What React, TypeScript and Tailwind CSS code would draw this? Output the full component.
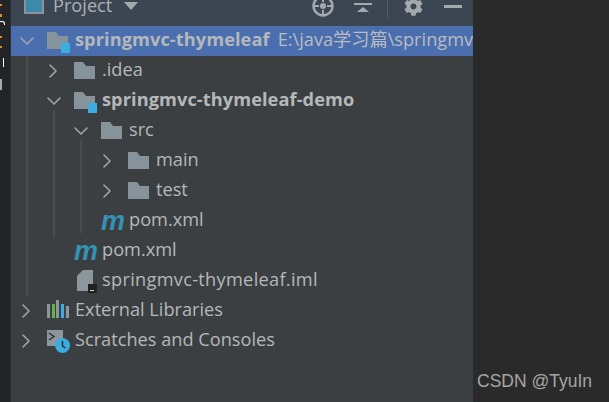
import { ChevronDown, ChevronRight } from "lucide-react"
import { FaCog } from "react-icons/fa"

const Folder = ({ badge }: { badge?: boolean }) => (
  <svg width="24" height="24" viewBox="0 0 24 24" className="shrink-0 overflow-visible">
    <path d="M2 3h9l3 4h9v13H2z" fill="#87939a" />
    {badge && <rect x="16" y="14" width="9" height="10" fill="#3aaee0" />}
  </svg>
)

const Maven = () => (
  <span className="w-[24px] shrink-0 pl-[2px] text-center font-['Liberation_Sans',sans-serif] text-[27px] leading-[24px] font-bold italic text-[#3592b5]">m</span>
)

const Iml = () => (
  <svg width="24" height="24" viewBox="0 0 24 24" className="shrink-0 overflow-visible">
    <path d="M11 1h10v21H5V7z" fill="#8c979d" />
    <rect x="16" y="15" width="9" height="9" fill="#1f2022" />
    <rect x="18" y="21" width="4" height="1" fill="#d5d5d5" />
  </svg>
)

const Libraries = () => (
  <svg width="24" height="24" viewBox="0 0 24 24" className="shrink-0">
    <rect x="2" y="5" width="3" height="14" fill="#8c979d" />
    <rect x="7" y="5" width="3" height="14" fill="#62b543" />
    <rect x="11" y="1" width="3" height="18" fill="#8c979d" />
    <rect x="16" y="5" width="3" height="14" fill="#3aaee0" />
    <rect x="21" y="7" width="3" height="12" fill="#8c979d" />
  </svg>
)

const Scratches = () => (
  <svg width="24" height="24" viewBox="0 0 24 24" className="shrink-0 overflow-visible">
    <rect x="2" y="1" width="16" height="16" fill="#8c979d" />
    <path d="M4 4l5 3.5-5 3.5" fill="none" stroke="#2f3335" strokeWidth="1.5" />
    <circle cx="17.5" cy="16.5" r="7.5" fill="#3aaee0" />
    <path d="M17.5 12v5l3 2" fill="none" stroke="#2b2d30" strokeWidth="1.5" />
  </svg>
)

const Target = () => (
  <svg width="22" height="22" viewBox="0 0 22 22" className="shrink-0">
    <circle cx="11" cy="11" r="9.5" fill="none" stroke="#a4a9ad" strokeWidth="2.4" />
    <circle cx="11" cy="11" r="3" fill="#a4a9ad" />
    <path d="M11 1v6M11 15v6M1 11h6M15 11h6" stroke="#a4a9ad" strokeWidth="2" />
  </svg>
)

const Collapse = () => (
  <svg width="18" height="22" viewBox="0 0 18 22" className="shrink-0">
    <rect x="0" y="8" width="18" height="2" fill="#a4a9ad" />
    <path d="M9 12l6 5H3z" fill="#a4a9ad" />
  </svg>
)

type Row = {
  indent: number
  arrow?: "open" | "closed"
  icon: React.ReactNode
  name: string
  bold?: boolean
  wide?: boolean
  path?: string
  selected?: boolean
}

const rows: Row[] = [
  { indent: 18, arrow: "open", icon: <Folder badge />, name: "springmvc-thymeleaf", bold: true, path: "E:\\java学习篇\\springmvc-thymeleaf", selected: true },
  { indent: 45, arrow: "closed", icon: <Folder />, name: ".idea" },
  { indent: 45, arrow: "open", icon: <Folder badge />, name: "springmvc-thymeleaf-demo", bold: true },
  { indent: 72, arrow: "open", icon: <Folder />, name: "src" },
  { indent: 99, arrow: "closed", icon: <Folder />, name: "main" },
  { indent: 99, arrow: "closed", icon: <Folder />, name: "test" },
  { indent: 72, icon: <Maven />, name: "pom.xml" },
  { indent: 45, icon: <Maven />, name: "pom.xml" },
  { indent: 45, icon: <Iml />, name: "springmvc-thymeleaf.iml", wide: true },
  { indent: 18, arrow: "closed", icon: <Libraries />, name: "External Libraries" },
  { indent: 18, arrow: "closed", icon: <Scratches />, name: "Scratches and Consoles" },
]

export default function App() {
  return (
    <div className="flex h-[402px] w-[609px] overflow-hidden bg-[#2a2a2a] font-['Open_Sans','Noto_Sans_CJK_SC',sans-serif]">
      <div className="relative w-[10px] shrink-0 bg-[#232425]">
        <span className="absolute top-[4px] left-0 h-[2px] w-[2px] bg-[#d9902f]" />
        <span className="absolute top-[14px] left-0 h-[3px] w-[2px] bg-[#d9902f]" />
        <span className="absolute top-[21px] left-0 h-[4px] w-[5px] rounded-tr-[3px] border-t border-r border-white" />
        <span className="absolute top-[36px] left-0 h-[2px] w-[2px] bg-[#d9902f]" />
        <span className="absolute top-[46px] left-0 h-[2px] w-[2px] bg-[#d9902f]" />
        <span className="absolute top-[58px] left-[3px] h-[9px] w-[1px] bg-white" />
        <span className="absolute top-[79px] left-0 h-[11px] w-[2px] bg-[#a8a8a8]" />
      </div>
      <div className="flex w-[463px] shrink-0 flex-col overflow-hidden border-l border-[#2f3234] bg-[#3c3f41]">
        <div className="flex h-[26px] shrink-0 items-start justify-between overflow-hidden bg-[#3c4652] pr-[11px] pl-[13px]">
          <div className="-mt-[6px] flex h-[24px] items-center text-[18.2px] text-[#aab0b4]">
            <span className="h-[16px] w-[20px] border-2 border-[#8a9399] bg-[#3d89a8]" />
            <span className="ml-[9px]">Project</span>
            <span className="ml-[12px] border-x-[7px] border-t-[8px] border-x-transparent border-t-[#a4a9ad]" />
          </div>
          <div className="-mt-[6px] flex h-[24px] items-center">
            <Target />
            <span className="ml-[20px]"><Collapse /></span>
            <span className="ml-[15px] h-[24px] w-[1px] bg-[#555a5f]" />
            <FaCog className="ml-[16px] text-[19px] text-[#a4a9ad]" />
            <span className="ml-[21px] h-[3px] w-[18px] bg-[#a4a9ad]" />
          </div>
        </div>
        <ul className="relative flex flex-col">
          <span className="absolute top-[24px] left-[15px] h-[247px] w-[2px] bg-[#4a4d50]" />
          <span className="absolute top-[84px] left-[42px] h-[127px] w-[2px] bg-[#4a4d50]" />
          <span className="absolute top-[114px] left-[69px] h-[93px] w-[2px] bg-[#4a4d50]" />
          {rows.map((row, i) => (
            <li
              key={i}
              className={`relative flex h-[30px] items-center whitespace-nowrap text-[18.2px] text-[#b4b8ba] ${row.selected ? "bg-[#4b6eaf]" : ""}`}
            >
              <span className="shrink-0" style={{ width: row.indent - 11 }} />
              <span className="flex w-[27px] shrink-0 items-center text-[#a0a4a7]">
                {row.arrow === "open" && <ChevronDown size={24} strokeWidth={1.6} absoluteStrokeWidth className="-ml-[3px]" />}
                {row.arrow === "closed" && <ChevronRight size={24} strokeWidth={1.6} absoluteStrokeWidth className="-ml-[4px]" />}
              </span>
              {row.icon}
              <span className={`ml-[6px] -mt-[2px] ${row.bold ? "font-bold tracking-[0.08px]" : ""} ${row.wide ? "tracking-[0.3px]" : ""}`}>{row.name}</span>
              {row.path && <span className="ml-[8px] -mt-[2px] text-[#b9bcc0]">{row.path}</span>}
            </li>
          ))}
        </ul>
      </div>
      <div className="relative flex-1">
        <span className="absolute top-[368px] left-[4px] font-['Liberation_Sans',sans-serif] text-[17.5px] text-[#a5a5a5]">CSDN @TyuIn</span>
      </div>
    </div>
  )
}
